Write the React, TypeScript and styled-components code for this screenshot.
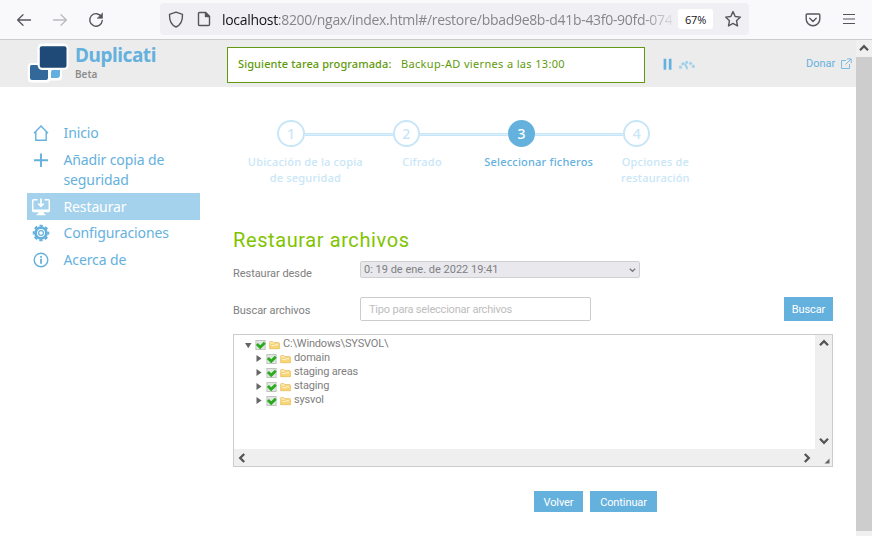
import React from "react";
import styled, { createGlobalStyle } from "styled-components";

const BLUE = "#65b1de";
const PALE = "#c8e6f7";

const Global = createGlobalStyle`
  * { box-sizing: border-box; }
  body { margin: 0; background: #fff; overflow: hidden; font-family: "Noto Sans", "Open Sans", sans-serif; }
  button, input { font: inherit; margin: 0; }
  svg { display: block; flex: none; }
`;

const Window = styled.div`
  width: 872px;
  height: 536px;
  display: flex;
  flex-direction: column;
`;

/* browser toolbar */
const Toolbar = styled.div`
  height: 40px;
  flex: none;
  display: flex;
  align-items: center;
  background: #f9f9fb;
  border-bottom: 1px solid #ccc;
  padding: 0 0 0 16px;
`;
const NavIcons = styled.div`
  display: flex;
  flex: none;
  gap: 20px;
  width: 144px;
`;
const AddressBar = styled.div`
  width: 589px;
  flex: none;
  height: 32px;
  margin-top: -1px;
  display: flex;
  align-items: center;
  border-radius: 4px;
  background: #f0f0f4;
  padding: 0 7px 0 8px;
`;
const Url = styled.div`
  margin-left: 10px;
  margin-top: 2px;
  width: 452px;
  overflow: hidden;
  white-space: nowrap;
  font: 14px/20px "Open Sans", sans-serif;
  letter-spacing: -0.31px;
  color: #85858c;
  mask-image: linear-gradient(to right, #000 420px, transparent 456px);
  b { font-weight: 400; color: #15141a; }
`;
const ZoomBadge = styled.span`
  width: 35px;
  height: 20px;
  margin: 0 11px 0 4px;
  border-radius: 3px;
  background: #fff;
  color: #15141a;
  font: 11px/21px "Open Sans", sans-serif;
  letter-spacing: -0.2px;
  text-align: center;
`;
const ToolbarEnd = styled.div`
  display: flex;
  align-items: center;
  gap: 20px;
  margin-left: 56px;
`;

/* page */
const Viewport = styled.div`
  flex: 1;
  min-height: 0;
  display: flex;
`;
const Page = styled.div`
  flex: 1;
  min-width: 0;
`;
const PageScroll = styled.div`
  width: 16px;
  background: #f0f0f0;
  display: flex;
  flex-direction: column;
  align-items: center;
  svg { margin: 3px 0 4px; }
`;
const PageThumb = styled.div`
  width: 16px;
  height: 474px;
  background: #cdcdcd;
`;
const Header = styled.header`
  height: 47px;
  background: #ececec;
  display: flex;
  align-items: flex-start;
  padding-left: 27px;
`;
const LogoBox = styled.div`
  width: 48px;
  padding-top: 2px;
`;
const Brand = styled.div`
  width: 152px;
  padding-top: 3px;
  color: ${BLUE};
  font-size: 19px;
  font-weight: 700;
  line-height: 24px;
  letter-spacing: -0.42px;
`;
const Stage = styled.div`
  color: #8c8c8c;
  font-size: 10px;
  font-weight: 600;
  line-height: 14px;
  letter-spacing: 0;
`;
const NextTask = styled.div`
  width: 418px;
  height: 36px;
  margin-top: 7px;
  border: 1px solid #629712;
  background: #fff;
  color: #5f9a0b;
  display: flex;
  align-items: center;
  padding: 0 0 2px 10px;
  font-size: 11px;
  line-height: 16px;
`;
const TaskLabel = styled.span`
  width: 163px;
  font-weight: 500;
  letter-spacing: 0.09px;
`;
const TaskName = styled.span`
  letter-spacing: 0.34px;
`;
const HeaderIcons = styled.div`
  display: flex;
  gap: 5px;
  margin: 17px 0 0 18px;
`;
const Donate = styled.a`
  display: flex;
  align-items: center;
  gap: 5px;
  margin: 15px 0 0 110px;
  color: ${BLUE};
  font: 11px/16px Roboto, sans-serif;
  span { padding-top: 1px; }
`;
const Columns = styled.div`
  display: flex;
  padding: 33px 0 0 27px;
`;
const Menu = styled.nav`
  width: 173px;
  margin-right: 33px;
`;
const MenuItem = styled.a<{ $active?: boolean }>`
  display: flex;
  align-items: flex-start;
  padding: 3.33px 20px 3.33px 4px;
  color: ${p => (p.$active ? "#fff" : BLUE)};
  background: ${p => (p.$active ? "#a4d1ec" : "transparent")};
  font-size: 14px;
  line-height: 20px;
  letter-spacing: -0.12px;
  svg { width: 20px; height: 20px; margin-right: 12.5px; }
`;
const Content = styled.main`
  width: 600px;
`;
const StepTrack = styled.div`
  display: flex;
  align-items: center;
  padding-left: 44.3px;
`;
const StepCircle = styled.div<{ $active?: boolean }>`
  width: 27.3px;
  height: 27px;
  border-radius: 50%;
  border: 2px solid ${p => (p.$active ? BLUE : PALE)};
  background: ${p => (p.$active ? BLUE : "#fff")};
  color: ${p => (p.$active ? "#fff" : PALE)};
  font-size: 14px;
  font-weight: 500;
  line-height: 24px;
  text-align: center;
`;
const StepLine = styled.div`
  width: 88px;
  height: 3px;
  margin-top: 2px;
  background: #d8f1fc;
  border: solid ${PALE};
  border-width: 1px 0;
`;
const StepLabels = styled.div`
  display: grid;
  grid-template-columns: repeat(4, 116.7px);
  margin: 7px 0 0 14px;
`;
const StepLabel = styled.div<{ $active?: boolean }>`
  color: ${p => (p.$active ? BLUE : PALE)};
  font-size: 11px;
  font-weight: 500;
  line-height: 16px;
  letter-spacing: 0.2px;
  text-align: center;
  white-space: pre;
`;
const Title = styled.h1`
  margin: 41px 0 0;
  height: 26px;
  color: #7fc400;
  font: 400 20px/27px Roboto, sans-serif;
  letter-spacing: 0.6px;
`;
const Field = styled.div<{ $top: number; $height: number }>`
  display: flex;
  align-items: center;
  height: ${p => p.$height}px;
  margin-top: ${p => p.$top}px;
  color: #808080;
  font: 11px/16px Roboto, sans-serif;
`;
const FieldLabel = styled.label<{ $drop: number }>`
  width: 127px;
  padding-top: ${p => p.$drop}px;
  letter-spacing: -0.05px;
`;
const Select = styled.div`
  width: 280px;
  height: 17px;
  border: 1px solid #cfcfd2;
  border-radius: 2px;
  background: #e9e9ed;
  display: flex;
  align-items: center;
  justify-content: space-between;
  padding: 0 3px;
  color: #808084;
`;
const SearchInput = styled.input`
  width: 231px;
  height: 24px;
  border: 1px solid #ccc;
  border-radius: 2px;
  padding: 0 8px;
  letter-spacing: -0.2px;
  outline: none;
  &::placeholder { color: #bdbdbd; opacity: 1; }
`;
const Button = styled.button<{ $w: number; $h?: number }>`
  width: ${p => p.$w}px;
  height: ${p => p.$h ?? 21}px;
  border: 0;
  padding: 2px 0 0;
  background: ${BLUE};
  color: #fff;
  font: 11px/16px Roboto, sans-serif;
  letter-spacing: -0.1px;
`;
const SearchButton = styled(Button)`
  margin-left: auto;
`;
const TreeBox = styled.div`
  height: 133px;
  margin-top: 13px;
  border: 1px solid #ccc;
  display: grid;
  grid-template: 1fr 17px / 1fr 17px;
`;
const Tree = styled.div`
  padding: 2px 0 0 10px;
`;
const TreeRow = styled.div<{ $depth: number }>`
  display: flex;
  align-items: center;
  height: 14px;
  padding-left: ${p => p.$depth * 11}px;
  color: #808080;
  font: 11px/14px Roboto, sans-serif;
  letter-spacing: -0.17px;
  svg { margin-top: 1px; }
`;
const TreeIcons = styled.span`
  display: flex;
  gap: 3px;
  margin-right: 3px;
`;
const ScrollTrack = styled.div<{ $row?: boolean }>`
  display: flex;
  flex-direction: ${p => (p.$row ? "row" : "column")};
  align-items: center;
  justify-content: space-between;
  background: #efefef;
  padding: ${p => (p.$row ? "0 3px" : "3px 0")};
`;
const Grip = styled.div`
  background: #efefef;
  display: flex;
  align-items: flex-end;
  justify-content: flex-end;
  padding: 2px;
`;
const Footer = styled.div`
  display: flex;
  gap: 7px;
  margin: 24px 0 0 301px;
`;

const Chevron = ({ turn }: { turn: number }) => (
  <svg width="10" height="10" viewBox="0 0 10 10" transform={`rotate(${turn})`}>
    <path d="M1 7.200 5 3.200 9 7.200" fill="none" stroke="#555" strokeWidth="2.300" />
  </svg>
);

const Arrow = ({ back }: { back?: boolean }) => (
  <svg width="16" height="16" viewBox="0 0 16 16" fill="none" stroke={back ? "#56555c" : "#bab9be"} strokeWidth="1.300" strokeLinecap="round" strokeLinejoin="round" transform={back ? undefined : "scale(-1 1)"}>
    <path d="M14.500 8H1.800M7 2.800 1.600 8 7 13.200" />
  </svg>
);

const Logo = () => (
  <svg width="43" height="41" viewBox="0 0 43 41">
    <g fill="#fff">
      <rect x="10.500" y="1.500" width="31" height="26.500" rx="4.500" />
      <rect x=".8" y="21" width="23" height="19.500" rx="4" />
      <rect x="20" y="24" width="15" height="14.500" rx="3.500" />
    </g>
    <rect x="12.800" y="4.300" width="26.700" height="21.500" rx="2" fill="#1f4a77" />
    <path d="M4.500 23h6q.5 5 5 5h5.500v8q0 2-2 2h-14q-2 0-2-2V25q0-2 1.500-2Z" fill="#33689b" />
    <path d="M24 29.500q0-1.500 1.500-1.500H33v5q0 3-3 3h-6Z" fill="#62b0df" />
  </svg>
);

const RowIcons = ({ open }: { open?: boolean }) => (
  <TreeIcons>
    <svg width="8" height="10" viewBox="0 0 8 10">
      <path d={open ? "M1 3h6.500L4.250 8.200Z" : "M1.500 1v7L6.500 4.500Z"} fill="#666" />
    </svg>
    <svg width="11" height="10" viewBox="0 0 11 10">
      <rect x=".9" y=".5" width="9.200" height="9" fill="#e2e8e1" stroke="#c0c5bf" />
      <path d="m1.900 4 3.300 3.300 4.600-4.500" fill="none" stroke="#2cab20" strokeWidth="2.900" />
    </svg>
    <svg width="11" height="10" viewBox="0 0 11 10">
      <path d="M.6 8.700V2.200q0-.7.7-.7h2.500l1 1h4.700q.8 0 .8.800v5.400Z" fill="#fbe6a6" stroke="#eac16c" strokeWidth=".8" />
      <path d="m1 8.500 1-4h2.600l.8-.8h4.900V8.500Z" fill="#f8d675" stroke="#efc05c" strokeWidth=".5" />
      <path d="M2.500 5.600h2.500l.8-.8h3.400" stroke="#fffbe4" strokeWidth=".9" fill="none" />
    </svg>
  </TreeIcons>
);

const HomeIcon = () => (
  <svg viewBox="0 0 20 20" fill="none" stroke="currentColor" strokeWidth="1.400">
    <path d="M3 10.200 10 3l7 7.200M4.800 9v8.200h10.400V9" />
  </svg>
);
const PlusIcon = () => (
  <svg viewBox="0 0 20 20" fill="none" stroke="currentColor" strokeWidth="1.900">
    <path d="M10 3.500v13.500M3 10.300h14" />
  </svg>
);
const RestoreIcon = () => (
  <svg viewBox="0 0 20 20" fill="none" stroke="currentColor" strokeWidth="1.500">
    <path d="M6.500 2.800H2.600q-.9 0-.9.900v9.800q0 .9.900.9h14.800q.9 0 .9-.9V3.700q0-.9-.9-.9H13.500" />
    <path d="M1.700 13.500h16.600" strokeWidth="2" />
    <path d="M10 1.500v7M7.200 6.500 10 9.300l2.800-2.800" strokeWidth="1.700" />
    <path d="M7.500 14h5l.6 3h1.400v1.300h-9V17h1.400Z" fill="currentColor" stroke="none" />
  </svg>
);
const GearIcon = () => (
  <svg viewBox="0 0 20 20" fill="none" stroke="currentColor">
    <circle cx="10" cy="10" r="5.400" strokeWidth="2.900" />
    <circle cx="10" cy="10" r="7.300" strokeWidth="2" strokeDasharray="3.200 2.533" strokeDashoffset="1.600" />
    <circle cx="10" cy="10" r="2.400" strokeWidth="1.200" />
  </svg>
);
const InfoIcon = () => (
  <svg viewBox="0 0 20 20" fill="none" stroke="currentColor" strokeWidth="1.400">
    <circle cx="10" cy="10" r="6.800" />
    <path d="M10 8.800v5M10 5.900v1.800" strokeWidth="1.800" />
  </svg>
);

const menu = [
  { label: "Inicio", icon: <HomeIcon /> },
  { label: "Añadir copia de seguridad", icon: <PlusIcon /> },
  { label: "Restaurar", icon: <RestoreIcon />, active: true },
  { label: "Configuraciones", icon: <GearIcon /> },
  { label: "Acerca de", icon: <InfoIcon /> },
];
const steps = ["Ubicación de la copia\nde seguridad", "Cifrado", "Seleccionar ficheros", "Opciones de\nrestauración"];
const folders = ["domain", "staging areas", "staging", "sysvol"];
const CURRENT = 2;

export default function App() {
  return (
    <Window>
      <Global />
      <Toolbar>
        <NavIcons>
          <Arrow back />
          <Arrow />
          <svg width="16" height="16" viewBox="0 0 16 16" fill="none" stroke="#56555c" strokeWidth="1.400" strokeLinecap="round">
            <path d="M13.600 5A6.300 6.300 0 1 0 14.300 8.500" />
            <path d="M14.500 1.300v5H9.500Z" fill="#56555c" strokeWidth=".6" strokeLinejoin="round" />
          </svg>
        </NavIcons>
        <AddressBar>
          <svg width="16" height="17" viewBox="0 0 16 17" fill="none" stroke="#56555c" strokeWidth="1.400" strokeLinejoin="round">
            <path d="M8 1.200 14.500 3.400c.2 6-1.800 10.500-6.500 12.600C3.300 13.900 1.300 9.400 1.500 3.400Z" />
          </svg>
          <svg width="28" height="16" viewBox="-13 0 28 16" fill="none" stroke="#56555c" strokeWidth="1.400" strokeLinejoin="round">
            <path d="M2.500 1.500h6l4 4v8q0 1-1 1h-9q-1 0-1-1v-11q0-1 1-1Z" />
            <path d="M8.500 1.500v4h4Z" fill="#56555c" />
          </svg>
          <Url><b>localhost</b>:8200/ngax/index.html#/restore/bbad9e8b-d41b-43f0-90fd-074</Url>
          <ZoomBadge>67%</ZoomBadge>
          <svg width="18" height="18" viewBox="0 0 18 18" fill="none" stroke="#56555c" strokeWidth="1.400" strokeLinejoin="round">
            <path d="m9 1.600 2.200 4.900 5.200.6-3.900 3.600 1 5.300L9 13.400 4.500 16l1-5.300L1.600 7.100l5.200-.6Z" />
          </svg>
        </AddressBar>
        <ToolbarEnd>
          <svg width="16" height="16" viewBox="0 0 16 16" fill="none" stroke="#56555c" strokeWidth="1.400" strokeLinecap="round" strokeLinejoin="round">
            <path d="M2.200 2h11.600q1 0 1 1v4a6.800 6.800 0 0 1-13.600 0V3q0-1 1-1ZM4.800 6.300 8 9.400l3.200-3.100" />
          </svg>
          <svg width="16" height="16" viewBox="0 0 16 16" stroke="#56555c" strokeWidth="1.200">
            <path d="M2 2.500h12M2 7h12M2 11.500h12" />
          </svg>
        </ToolbarEnd>
      </Toolbar>
      <Viewport>
        <Page>
          <Header>
            <LogoBox><Logo /></LogoBox>
            <Brand>Duplicati<Stage>Beta</Stage></Brand>
            <NextTask>
              <TaskLabel>Siguiente tarea programada:</TaskLabel>
              <TaskName>Backup-AD viernes a las 13:00</TaskName>
            </NextTask>
            <HeaderIcons>
              <svg width="10" height="14" viewBox="0 0 10 14" fill={BLUE}>
                <path d="M.6 1.800h2.700v11H.6zM5.800 1.800h2.700v11H5.800z" />
              </svg>
              <svg width="18" height="14" viewBox="0 0 18 14" fill="none" stroke="#a2d0eb">
                <path d="M2.200 11.500A6.900 6.900 0 0 1 15.900 11.500" strokeWidth="2.800" strokeDasharray="2.700 1.300" />
                <path d="m7.200 7.300 1.900 4" strokeWidth="2.200" strokeLinecap="round" />
              </svg>
            </HeaderIcons>
            <Donate>
              <span>Donar</span>
              <svg width="12" height="12" viewBox="0 0 12 12" fill="none" stroke="#7cbce2">
                <path d="M6 2.500H1.500v8h8V6M7 .9h4.200v4.200M11 1 5.500 6.500" />
              </svg>
            </Donate>
          </Header>
          <Columns>
            <Menu>
              {menu.map(m => (
                <MenuItem key={m.label} $active={m.active}>{m.icon}<span>{m.label}</span></MenuItem>
              ))}
            </Menu>
            <Content>
              <StepTrack>
                {steps.map((s, i) => (
                  <React.Fragment key={s}>
                    {i > 0 && <StepLine />}
                    <StepCircle $active={i === CURRENT}>{i + 1}</StepCircle>
                  </React.Fragment>
                ))}
              </StepTrack>
              <StepLabels>
                {steps.map((s, i) => <StepLabel key={s} $active={i === CURRENT}>{s}</StepLabel>)}
              </StepLabels>
              <Title>Restaurar archivos</Title>
              <Field $top={8} $height={17}>
                <FieldLabel $drop={9}>Restaurar desde</FieldLabel>
                <Select>
                  0: 19 de ene. de 2022 19:41
                  <svg width="7" height="6" viewBox="0 0 7 6" fill="none" stroke="#77777c" strokeWidth="1.300">
                    <path d="m.8 1.800 2.700 2.500 2.700-2.500" />
                  </svg>
                </Select>
              </Field>
              <Field $top={19} $height={24}>
                <FieldLabel $drop={4}>Buscar archivos</FieldLabel>
                <SearchInput placeholder="Tipo para seleccionar archivos" />
                <SearchButton $w={49} $h={24}>Buscar</SearchButton>
              </Field>
              <TreeBox>
                <Tree>
                  <TreeRow $depth={0}><RowIcons open />C:\Windows\SYSVOL\</TreeRow>
                  {folders.map(f => <TreeRow key={f} $depth={1}><RowIcons />{f}</TreeRow>)}
                </Tree>
                <ScrollTrack><Chevron turn={0} /><Chevron turn={180} /></ScrollTrack>
                <ScrollTrack $row><Chevron turn={-90} /><Chevron turn={90} /></ScrollTrack>
                <Grip>
                  <svg width="6" height="6" viewBox="0 0 6 6"><path d="M5.500.5v5h-5Z" fill="#666" /></svg>
                </Grip>
              </TreeBox>
              <Footer>
                <Button $w={49}>Volver</Button>
                <Button $w={67}>Continuar</Button>
              </Footer>
            </Content>
          </Columns>
        </Page>
        <PageScroll>
          <Chevron turn={0} />
          <PageThumb />
        </PageScroll>
      </Viewport>
    </Window>
  );
}
